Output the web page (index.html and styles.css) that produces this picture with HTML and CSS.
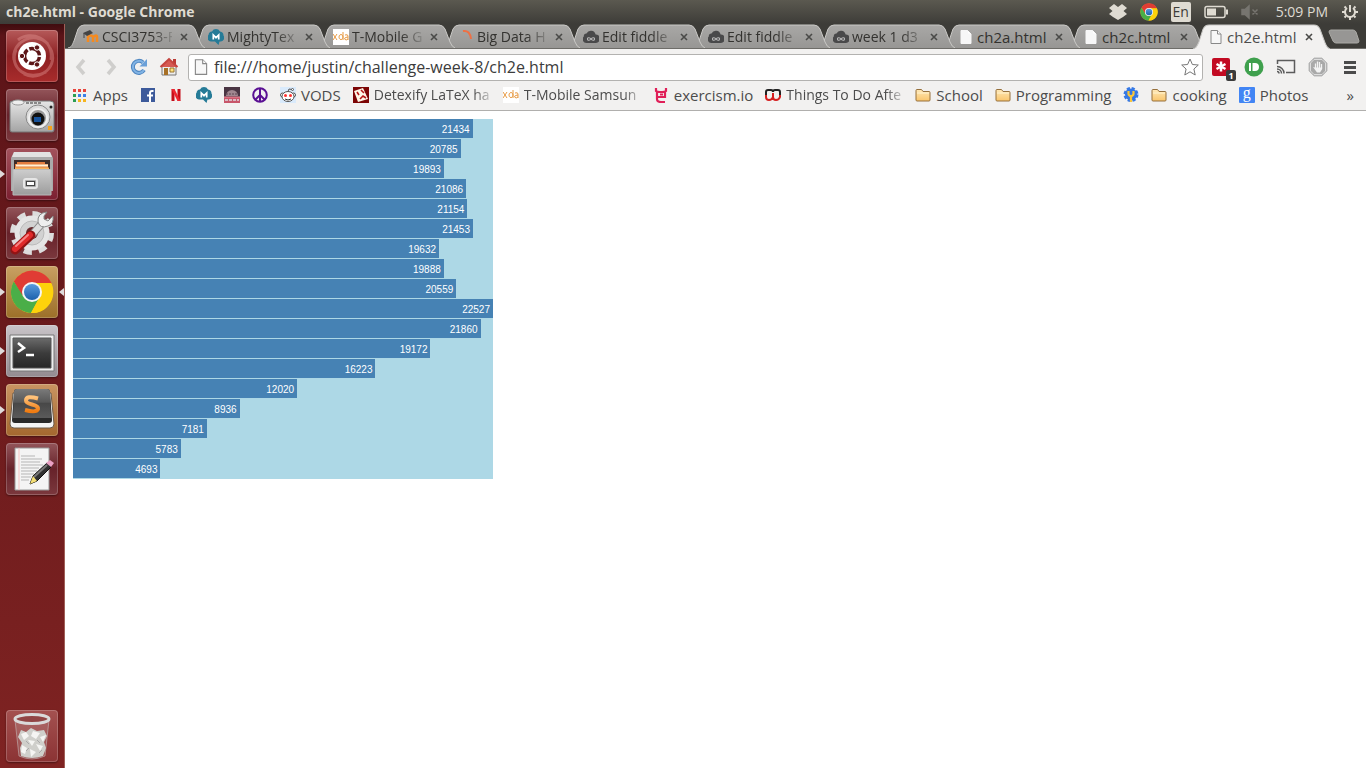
FILE: index.html
```html
<!DOCTYPE html>
<html lang="en">
<head>
<meta charset="utf-8">
<title>ch2e.html</title>
<link rel="stylesheet" href="styles.css">
</head>
<body>
<svg class="defs" aria-hidden="true">
  <defs>
    <linearGradient id="tabFill" x1="0" y1="0" x2="0" y2="1"><stop offset="0" stop-color="#a9a8a6"/><stop offset="1" stop-color="#979694"/></linearGradient>
    <linearGradient id="silver" x1="0" y1="0" x2="0" y2="1"><stop offset="0" stop-color="#e6e6e6"/><stop offset="1" stop-color="#a4a4a4"/></linearGradient>
    <linearGradient id="front" x1="0" y1="0" x2="0" y2="1"><stop offset="0" stop-color="#cdcdcd"/><stop offset="1" stop-color="#9c9c9c"/></linearGradient>
    <linearGradient id="dark" x1="0" y1="0" x2="0" y2="1"><stop offset="0" stop-color="#6b6b6b"/><stop offset=".5" stop-color="#3c3c3c"/><stop offset="1" stop-color="#262626"/></linearGradient>
    <linearGradient id="key" x1="0" y1="0" x2="0" y2="1"><stop offset="0" stop-color="#7a7a7a"/><stop offset=".45" stop-color="#585858"/><stop offset=".5" stop-color="#484848"/><stop offset="1" stop-color="#5a5a5a"/></linearGradient>
    <linearGradient id="orange" x1="0" y1="0" x2="0" y2="1"><stop offset="0" stop-color="#ffc27a"/><stop offset="1" stop-color="#f07c12"/></linearGradient>
    <linearGradient id="folderFill" x1="0" y1="0" x2="0" y2="1"><stop offset="0" stop-color="#ffe9b8"/><stop offset="1" stop-color="#f9c56c"/></linearGradient>
    <linearGradient id="blue" x1="0" y1="0" x2="0" y2="1"><stop offset="0" stop-color="#5a9bdc"/><stop offset="1" stop-color="#1c61ac"/></linearGradient>
  </defs>
  <symbol id="tab-shape" viewBox="0 0 138 24" preserveAspectRatio="none">
    <path d="M1 24C5 23 5 21 7 17L11 5Q13 1 17 1H122Q126 1 128 5L133 18Q135 23 138 24Z"/>
    <path d="M1 24C5 23 5 21 7 17L11 5Q13 1 17 1H122Q126 1 128 5L133 18Q135 23 138 24" fill="none" stroke="#c9c8c5"/>
  </symbol>
  <symbol id="x" viewBox="0 0 16 16"><path d="M5 5L11 11M11 5L5 11" stroke="#4a4a48" stroke-width="1.600" fill="none"/></symbol>
  <symbol id="chrome" viewBox="0 0 44 44">
    <circle cx="22" cy="22" r="21" fill="#fdd20b"/>
    <path d="M3.800 11.500A21 21 0 0 1 41.800 14H22L12 26Z" fill="#e03c34"/>
    <path d="M3.800 11.500A21 21 0 0 0 21 43L30 27L22 22L13 26Z" fill="#4aae48"/>
    <path d="M22 13H41.300A21 21 0 0 1 21 43L30 26Z" fill="#fdd20b"/>
    <circle cx="22" cy="22" r="10" fill="#f5f5f5"/><circle cx="22" cy="22" r="8" fill="url(#blue)"/>
  </symbol>
  <symbol id="cloud" viewBox="0 0 16 16"><path d="M4 14A3.800 3.800 0 0 1 .800 7.500A2.800 2.800 0 0 1 3.500 4.500A4.900 4.900 0 0 1 12.600 5.500A4.200 4.200 0 0 1 13 14Z" fill="#49494a"/><path d="M8 10C7 8.500 4.500 8 4.500 10S7 11.500 8 10S11.500 8 11.500 10S9 11.500 8 10Z" fill="none" stroke="#bbb" stroke-width="1.100"/></symbol>
  <symbol id="page" viewBox="0 0 16 16"><path d="M3 1.500H9.500L13 5V14.500H3Z" fill="#f7f7f7" stroke="currentColor"/><path d="M9.500 1.500V5H13" fill="#fff" stroke="currentColor"/></symbol>
  <symbol id="mighty" viewBox="0 0 16 16"><path d="M3 12.500A3.800 3.800 0 0 1 .500 6A4 4 0 0 1 4 2.500A4.500 4.500 0 0 1 12 2.500A4 4 0 0 1 15.500 6.500A3.800 3.800 0 0 1 13 12.500H11.500L10.500 16L7 12.500Z" fill="#267b97"/><path d="M5.300 10.500V6L8 8.700L10.700 6V10.500" fill="none" stroke="#fff" stroke-width="1.700"/></symbol>
  <symbol id="xda" viewBox="0 0 16 16"><path d="M0 0H16V16H0Z" fill="#fff"/><path d="M0 5L4 11M4 5L0 11M10 3V11M10 8A2 2.500 0 1 0 10 8.100M15 11V7Q15 5 12 6M15 8Q11.500 8 11.500 10Q13 12 15 10" fill="none" stroke="#e79a43"/></symbol>
  <symbol id="folder" viewBox="0 0 16 16"><path d="M1 13V3.500Q1 2.500 2 2.500H6.500L8 4.500H14Q15 4.500 15 5.500V13Q15 14 14 14H2Q1 14 1 13Z" fill="url(#folderFill)" stroke="#96703c"/><path d="M2 6H14" stroke="#fff3cf"/></symbol>
</svg>

<header class="panel">
  <h1 class="panel-title">ch2e.html - Google Chrome</h1>
  <div class="indicators">
    <svg class="i18" viewBox="0 0 18 18"><path d="M5 1L9 4L13 1L18 5L14.500 8L18 11L14 14L9 17L4 14L0 11L3.500 8L0 5Z" fill="#dfdbd2"/></svg>
    <svg class="i18"><use href="#chrome"/></svg>
    <span class="lang">En</span>
    <svg class="battery" viewBox="0 0 24 14"><rect x="1" y="1.500" width="20" height="11" rx="2" fill="none" stroke="#dfdbd2" stroke-width="1.500"/><path d="M3 3.500H12V10.500H3ZM22 4.500H24V9.500H22Z" fill="#dfdbd2"/></svg>
    <svg class="i18" viewBox="0 0 18 18"><path d="M1 6.500H4L8 3V15L4 11.500H1ZM11.500 6.500L16.500 11.500M16.500 6.500L11.500 11.500" fill="#777570" stroke="#777570" stroke-width="1.500"/></svg>
    <span class="clock">5:09 PM</span>
    <svg class="i18" viewBox="0 0 18 18" fill="none" stroke="#dfdbd2" stroke-width="2"><path d="M6 5A5 5 0 1 0 12 5M9 2V9"/><path d="M3.500 3.500L5 5M14.500 3.500L13 5M1 9H4M14 9H17M3.500 14.500L5 13M14.500 14.500L13 13M9 14V17"/></svg>
  </div>
</header>

<div class="desktop">
  <nav class="launcher" aria-label="Launcher">
    <button class="tile dash" aria-label="Dash"><svg viewBox="0 0 52 52"><path d="M8 30C5 12 28 0 42 14M44 18C54 36 34 52 18 44M12 10C24 0 48 8 45 30M40 42C22 52 2 38 10 20" fill="none" stroke="#e59a98" stroke-opacity=".4" stroke-width="3"/><circle cx="26" cy="26" r="14" fill="#fff"/><circle cx="26" cy="26" r="7.500" fill="none" stroke="#5c1517" stroke-width="3.500" stroke-dasharray="13.700 2" stroke-dashoffset="-1"/><g fill="#5c1517" stroke="#fff"><circle cx="16" cy="26" r="2.700"/><circle cx="31" cy="17.500" r="2.700"/><circle cx="31" cy="34.500" r="2.700"/></g></svg></button>
    <button class="tile" aria-label="Camera"><svg viewBox="0 0 52 52"><path d="M4 14Q4 12 7 12H44Q48 12 48 15V41Q48 43 46 43H6Q4 43 4 41Z" fill="url(#silver)" stroke="#777"/><ellipse cx="12" cy="13.500" rx="6" ry="2.500" fill="#eee" stroke="#999"/><path d="M20 14H35" stroke="#888" stroke-width="2" stroke-dasharray="3 1"/><circle cx="32" cy="28" r="12" fill="#ddd" stroke="#888"/><circle cx="32" cy="29" r="9" fill="#999" stroke="#eee" stroke-width="2"/><circle cx="32" cy="30" r="6.500" fill="#111"/><path d="M28 28H35V33H28Z" fill="#17529b"/><path d="M42 37H46V41H42Z" fill="#f6a21b"/><circle cx="45" cy="18" r="1.500" fill="#222"/></svg></button>
    <button class="tile files running" aria-label="Files"><svg viewBox="0 0 52 52"><path d="M8 4H44L47 10V43H5V10Z" fill="#aaa"/><path d="M8 4H44L46 9H6Z" fill="#e2e2e2"/><path d="M8 12H44V22H8Z" fill="#3d2c28"/><path d="M11 14H39V16H42V22H9V16H11Z" fill="#e27c3f"/><path d="M10 17.500H42" stroke="#fff0d4" stroke-width="2"/><path d="M9 20.500H43" stroke="#f7b25c" stroke-width="2"/><path d="M7 21.500H45V47H7Z" fill="url(#front)" stroke="#b9b9b9"/><rect x="18" y="31" width="13" height="9" rx="2" fill="#aaa" stroke="#e6e6e6" stroke-width="2"/><rect x="20.500" y="33.500" width="8" height="4" fill="#fff" stroke="#444"/></svg></button>
    <button class="tile" aria-label="System Settings"><svg viewBox="0 0 52 52"><circle cx="26" cy="26" r="19" fill="none" stroke="#dcdcdc" stroke-width="6" stroke-dasharray="8 6.900"/><circle cx="26" cy="26" r="17.500" fill="#e5e5e5"/><circle cx="26" cy="26" r="12" fill="#d2d2d2" stroke="#bbb"/><circle cx="26" cy="26" r="6" fill="#67282b"/><path d="M25 29L38 14" stroke="#888" stroke-width="8"/><path d="M25 29L38 14" stroke="#ddd" stroke-width="6"/><path d="M41 5Q31 6 32 15Q34 22 42 19Q48 17 47 9L42 14L38 12V9Z" fill="#eee" stroke="#888"/><path d="M9 43L25 28" stroke="#921414" stroke-width="9" stroke-linecap="round"/><path d="M9 42L24 28" stroke="#df2a2a" stroke-width="6" stroke-linecap="round"/><path d="M10 39L22 28" stroke="#f78484" stroke-width="2" stroke-linecap="round"/></svg></button>
    <button class="tile gold running focused" aria-label="Google Chrome"><svg viewBox="0 0 52 52"><use href="#chrome" x="4" y="4" width="44" height="44"/></svg></button>
    <button class="tile grey running" aria-label="Terminal"><svg viewBox="0 0 52 52"><path d="M4 10H48V46H4Z" fill="#eee" stroke="#777"/><path d="M7 13H45V43H7Z" fill="url(#dark)" stroke="#555"/><path d="M12 18L18 23L12 27M20 30H28" fill="none" stroke="#fff" stroke-width="2.500"/></svg></button>
    <button class="tile gold-red running" aria-label="Sublime Text"><svg viewBox="0 0 52 52"><path d="M7 9L4 40Q4 44 8 44H44Q48 44 48 40L45 9Z" fill="#f4f4f4" stroke="#6b5a49"/><path d="M11 5H41Q44 5 44 8L46 36Q46 39 43 39H9Q6 39 6 36L8 8Q8 5 11 5Z" fill="#292929"/><path d="M11 5H41Q44 5 44 8L45 34H7L8 8Q8 5 11 5Z" fill="url(#key)"/><path d="M32 14.500Q20 11 20 16.500Q20 19 26 20.500Q32.500 22 32 25Q30.500 29 19 26" fill="none" stroke="url(#orange)" stroke-width="4"/></svg></button>
    <button class="tile" aria-label="Text Editor"><svg viewBox="0 0 52 52"><path d="M9 5H43V47H9Z" fill="#f4f4f4" stroke="#999"/><path d="M13 5V47" stroke="#f6c4c4"/><path d="M15 13H29M15 16H36M15 19H34M15 22H37M15 25H33M15 28H31M15 31H28M15 34H25M15 37H23" stroke="#b5b5b5"/><path d="M24 41L27 33L41 20L45 24L31 38Z" fill="#303030" stroke="#111"/><path d="M28 34L41 22" stroke="#777" stroke-width="2"/><path d="M24 41L27 33L31 38Z" fill="#f4df75"/><path d="M40 20L44 17L48 20L45 24Z" fill="#eaa1c4"/></svg></button>
    <button class="tile trash" aria-label="Trash"><svg viewBox="0 0 52 52"><path d="M9 10L13 46Q26 52 39 46L43 10Z" fill="#eee" fill-opacity=".15" stroke="#ccc" stroke-opacity=".5"/><path d="M12 27L15 20L20 22L25 18L31 21L38 20L41 26L38 32L40 38L37 46Q26 50 15 46L14 38L16 33Z" fill="#cfcfcb"/><path d="M15 24L20 22L23 26L18 30ZM27 21L34 23L30 29L25 26ZM34 27L40 25L37 32ZM22 30L29 31L26 36ZM16 35L21 38L19 44L15 42ZM30 34L37 36L34 41ZM24 39L30 42L25 47Z" fill="#f5f5f3"/><path d="M20 31L23 34M31 30L34 33M23 38L20 41M33 43L36 40" stroke="#aaa"/><ellipse cx="26" cy="9" rx="17" ry="4.500" fill="#914545" stroke="#dadada" stroke-width="3"/></svg></button>
  </nav>

  <main class="window">
    <div class="tabs" role="tablist">
      <div class="tab" style="--n:9"><svg class="shape"><use href="#tab-shape"/></svg><svg class="i16" viewBox="0 0 16 16"><path d="M5 13V8Q8 5 10 8V13M10 8Q14 5 14 8V13" fill="none" stroke="#f58a1f" stroke-width="2.500"/><path d="M0 4L7 1L10 4L4 7Z" fill="#444"/><path d="M1 4V9" stroke="#444"/></svg><span class="name" role="tab">CSCI3753-F</span><button class="close" aria-label="Close"><svg class="i16"><use href="#x"/></svg></button></div>
      <div class="tab" style="--n:8"><svg class="shape"><use href="#tab-shape"/></svg><svg class="i16"><use href="#mighty"/></svg><span class="name" role="tab">MightyTex</span><button class="close" aria-label="Close"><svg class="i16"><use href="#x"/></svg></button></div>
      <div class="tab" style="--n:7"><svg class="shape"><use href="#tab-shape"/></svg><svg class="i16"><use href="#xda"/></svg><span class="name" role="tab">T-Mobile G</span><button class="close" aria-label="Close"><svg class="i16"><use href="#x"/></svg></button></div>
      <div class="tab" style="--n:6"><svg class="shape"><use href="#tab-shape"/></svg><svg class="i16" viewBox="0 0 16 16"><path d="M5 2Q12 1 13 10" fill="none" stroke="#ef7044" stroke-width="2"/></svg><span class="name" role="tab">Big Data H</span><button class="close" aria-label="Close"><svg class="i16"><use href="#x"/></svg></button></div>
      <div class="tab" style="--n:5"><svg class="shape"><use href="#tab-shape"/></svg><svg class="i16"><use href="#cloud"/></svg><span class="name" role="tab">Edit fiddle</span><button class="close" aria-label="Close"><svg class="i16"><use href="#x"/></svg></button></div>
      <div class="tab" style="--n:4"><svg class="shape"><use href="#tab-shape"/></svg><svg class="i16"><use href="#cloud"/></svg><span class="name" role="tab">Edit fiddle</span><button class="close" aria-label="Close"><svg class="i16"><use href="#x"/></svg></button></div>
      <div class="tab" style="--n:3"><svg class="shape"><use href="#tab-shape"/></svg><svg class="i16"><use href="#cloud"/></svg><span class="name" role="tab">week 1 d3</span><button class="close" aria-label="Close"><svg class="i16"><use href="#x"/></svg></button></div>
      <div class="tab" style="--n:2"><svg class="shape"><use href="#tab-shape"/></svg><svg class="i16 white"><use href="#page"/></svg><span class="name whole" role="tab">ch2a.html</span><button class="close" aria-label="Close"><svg class="i16"><use href="#x"/></svg></button></div>
      <div class="tab" style="--n:1"><svg class="shape"><use href="#tab-shape"/></svg><svg class="i16 white"><use href="#page"/></svg><span class="name whole" role="tab">ch2c.html</span><button class="close" aria-label="Close"><svg class="i16"><use href="#x"/></svg></button></div>
      <div class="tab active" style="--n:10"><svg class="shape"><use href="#tab-shape"/></svg><svg class="i16 outline"><use href="#page"/></svg><span class="name whole" role="tab" aria-selected="true">ch2e.html</span><button class="close" aria-label="Close"><svg class="i16"><use href="#x"/></svg></button></div>
      <button class="new-tab" aria-label="New tab"><svg viewBox="0 0 32 16"><path d="M3 1H25Q27 1 28 3L31 12Q31 14 29 14H8Q6 14 5 12L1 3Q1 1 3 1Z" fill="#979694" stroke="#aaa9a5"/></svg></button>
    </div>

    <div class="toolbar">
      <button class="tool" aria-label="Back"><svg class="i18" viewBox="0 0 18 18"><path d="M12 2L6 9L12 16" fill="none" stroke="#cfcecc" stroke-width="3.500"/></svg></button>
      <button class="tool" aria-label="Forward"><svg class="i18" viewBox="0 0 18 18"><path d="M7 2L13 9L7 16" fill="none" stroke="#cfcecc" stroke-width="3.500"/></svg></button>
      <button class="tool" aria-label="Reload"><svg class="i18" viewBox="0 0 18 18"><path d="M14 12A6 6 0 1 1 13 4.500" fill="none" stroke="#4f86c0" stroke-width="4"/><path d="M14 12A6 6 0 1 1 13 4.500" fill="none" stroke="#82b4e5" stroke-width="2"/><path d="M17 1V8.500H9.500Z" fill="#6ba0d8"/></svg></button>
      <button class="tool" aria-label="Home"><svg class="i20" viewBox="0 0 20 20"><path d="M3 9H17V18H3Z" fill="#eee" stroke="#777"/><path d="M5 11H9V18H5Z" fill="#a77026"/><path d="M11 11H15V15H11Z" fill="#ffe37b" stroke="#9a7530"/><path d="M14 2H17V8H14Z" fill="#bb3b35"/><path d="M1.500 10L10 2L18.500 10" fill="#d65a53" stroke="#c5443f" stroke-width="2"/></svg></button>
      <div class="omnibox">
        <svg class="i18 outline"><use href="#page"/></svg>
        <input type="text" aria-label="Address" value="file:///home/justin/challenge-week-8/ch2e.html">
        <button class="star" aria-label="Bookmark"><svg class="i18" viewBox="0 0 18 18"><path d="M9 1L11.400 6.500L17.300 7L12.900 11L14.200 17L9 13.800L3.800 17L5.100 11L.700 7L6.600 6.500Z" fill="#fff" stroke="#777"/></svg></button>
      </div>
      <div class="extensions">
        <button class="ext" aria-label="Password manager"><svg class="i18" viewBox="0 0 18 18"><rect width="18" height="18" rx="2" fill="#c20a22"/><path d="M9 3.500V13.500M4.500 6L13.500 11M13.500 6L4.500 11" stroke="#fff" stroke-width="2.500"/></svg><span class="badge">1</span></button>
        <button class="ext" aria-label="Push"><svg class="i20" viewBox="0 0 20 20"><circle cx="10" cy="10" r="9.500" fill="#3fa04d"/><path d="M5 6H7V14H5ZM8.500 6H11A4 4 0 0 1 11 14H8.500Z" fill="#fff"/></svg></button>
        <button class="ext" aria-label="Cast"><svg class="i20" viewBox="0 0 20 20" fill="none" stroke="#5c5c5c"><path d="M1.500 7V3.500H18.500V15.500H10" stroke-width="1.500"/><path d="M1 9.500A7 7 0 0 1 8 16.500M1 12A4.500 4.500 0 0 1 5.500 16.500M1 14.500A2 2 0 0 1 3 16.500" stroke-width="1.500"/></svg></button>
        <button class="ext" aria-label="Blocker"><svg class="i20" viewBox="0 0 20 20"><path d="M6 1H14L19 6V14L14 19H6L1 14V6Z" fill="#a9a9a9" stroke="#bbb"/><path d="M6 2.500H14L17.500 6V14L14 17.500H6L2.500 14V6Z" fill="none" stroke="#ddd"/><path d="M7.500 11V6.500M9.500 11V4.500M11.500 11V5M13.500 11V7" stroke="#f2f2f2" stroke-width="1.300"/><path d="M5 10L7 10.500H14.200V12L12 15.500H9Z" fill="#f2f2f2"/></svg></button>
        <button class="ext" aria-label="Menu"><svg class="i20" viewBox="0 0 20 20"><path d="M4 5.500H16M4 10.500H16M4 15.500H16" stroke="#4b4b4b" stroke-width="3"/></svg></button>
      </div>
    </div>

    <nav class="bookmarks" aria-label="Bookmarks">
      <a href="#"><svg class="i16" viewBox="0 0 16 16"><path d="M1 2H4V5H1ZM6 2H9V5H6ZM11 2H14V5H11Z" fill="#e8453c"/><path d="M1 7H4V10H1ZM1 12H4V15H1Z" fill="#2c9f53"/><path d="M6 7H9V10H6ZM11 7H14V10H11Z" fill="#3b82e8"/><path d="M6 12H9V15H6ZM11 12H14V15H11Z" fill="#f6b51f"/></svg><span>Apps</span></a>
      <a href="#" aria-label="Facebook"><svg class="i16" viewBox="0 0 16 16"><path d="M1 1H15V15H1Z" fill="#3d5a9b"/><path d="M13.500 4H12Q10 4 10 6V15M7 8.500H13" fill="none" stroke="#fff" stroke-width="2"/></svg></a>
      <a href="#" aria-label="Netflix"><svg class="i16" viewBox="0 0 16 16"><path d="M5 2V14M11 2V14" stroke="#c50d19" stroke-width="3"/><path d="M3.500 2H6.500L12.500 14H9.500Z" fill="#ed2530"/></svg></a>
      <a href="#" aria-label="MightyText"><svg class="i16"><use href="#mighty"/></svg></a>
      <a href="#" aria-label="Arcade"><svg class="i16" viewBox="0 0 16 16"><path d="M0 0H16V16H0Z" fill="#4a3543"/><path d="M2 9A6 6 0 0 1 14 9Z" fill="#a08790"/><path d="M0 10H16V16H0Z" fill="#c8566a"/><path d="M2 7H14" stroke="#5c4450" stroke-dasharray="2 1"/><path d="M0 10H16" stroke="#ea8998"/><path d="M1 13H15" stroke="#d8b9c2" stroke-width="2" stroke-dasharray="3 1"/></svg></a>
      <a href="#" aria-label="Peace"><svg class="i16" viewBox="0 0 16 16"><path d="M8 1V15M8 8L3 13M8 8L13 13" stroke="#5a1093" stroke-width="2"/><circle cx="8" cy="8" r="6.800" fill="none" stroke="#5a1093" stroke-width="2"/></svg></a>
      <a href="#"><svg class="i16" viewBox="0 0 16 16"><path d="M0 0H16V16H0Z" fill="#d9eafb"/><g fill="#fff" stroke="#555"><circle cx="2.500" cy="8" r="2"/><circle cx="13.500" cy="8" r="2"/><ellipse cx="8" cy="9.500" rx="6" ry="5"/><path d="M8 4.500L9 2L12 2.500" fill="none"/><circle cx="12.500" cy="2.500" r="1"/></g><circle cx="5.500" cy="8.500" r="1.500" fill="#f33"/><circle cx="10.500" cy="8.500" r="1.500" fill="#f33"/><path d="M5 12Q8 14 11 12" fill="none" stroke="#333"/></svg><span>VODS</span></a>
      <a href="#"><svg class="i16" viewBox="0 0 16 16"><path d="M0 0H16V16H0Z" fill="#7c0505"/><path d="M1 4L10 1L15 12L5 15Z" fill="#fff8e8"/><path d="M4 5L6 8M8 3L11 6M7 12L10 9L13 11" fill="none" stroke="#b51818" stroke-width="1.600"/></svg><span class="fade">Detexify LaTeX ha</span></a>
      <a href="#"><svg class="i16"><use href="#xda"/></svg><span class="fade">T-Mobile Samsun</span></a>
      <a href="#"><svg class="i16" viewBox="0 0 16 16"><path d="M3 1V4Q4 5 7 5H9Q12 5 13 4V1M4 5V12Q4 15 8 15H12M12 5V10H5M7 7.500H10" fill="none" stroke="#e01f58" stroke-width="2.200"/></svg><span>exercism.io</span></a>
      <a href="#"><svg class="i16" viewBox="0 0 16 16" fill="none" stroke-width="2"><path d="M1 8V5Q1 3 3 3H6Q8 3 8 5Q8 3 10 3H13Q15 3 15 5V8" stroke="#222"/><path d="M1 8V10Q1 13 4 13T8 10V6M8 10Q8 13 11 13T15 10V8" stroke="#d51f20"/></svg><span class="fade">Things To Do Afte</span></a>
      <a href="#"><svg class="i16"><use href="#folder"/></svg><span>School</span></a>
      <a href="#"><svg class="i16"><use href="#folder"/></svg><span>Programming</span></a>
      <a href="#" aria-label="Tools"><svg class="i16" viewBox="0 0 16 16"><circle cx="8" cy="7.500" r="6" fill="#3578e5"/><circle cx="8" cy="7.500" r="6" fill="none" stroke="#3578e5" stroke-width="3" stroke-dasharray="3 1.700"/><path d="M5.500 4V7Q6 9 8 9T10.500 7V4M8 9V15" fill="none" stroke="#fbc638" stroke-width="2.200"/></svg></a>
      <a href="#"><svg class="i16"><use href="#folder"/></svg><span>cooking</span></a>
      <a href="#"><span class="google">g</span><span>Photos</span></a>
      <button class="more" aria-label="More bookmarks">»</button>
    </nav>

    <section class="page">
      <div class="chart">
        <div class="bar" style="width:95.15%">21434</div>
        <div class="bar" style="width:92.27%">20785</div>
        <div class="bar" style="width:88.31%">19893</div>
        <div class="bar" style="width:93.6%">21086</div>
        <div class="bar" style="width:93.91%">21154</div>
        <div class="bar" style="width:95.23%">21453</div>
        <div class="bar" style="width:87.15%">19632</div>
        <div class="bar" style="width:88.29%">19888</div>
        <div class="bar" style="width:91.26%">20559</div>
        <div class="bar" style="width:100%">22527</div>
        <div class="bar" style="width:97.04%">21860</div>
        <div class="bar" style="width:85.11%">19172</div>
        <div class="bar" style="width:72.02%">16223</div>
        <div class="bar" style="width:53.36%">12020</div>
        <div class="bar" style="width:39.67%">8936</div>
        <div class="bar" style="width:31.88%">7181</div>
        <div class="bar" style="width:25.67%">5783</div>
        <div class="bar" style="width:20.83%">4693</div>
      </div>
    </section>
  </main>
</div>
</body>
</html>
```

FILE: styles.css
```css
* { box-sizing: border-box; }
body {
  margin: 0;
  min-height: 100vh;
  display: flex;
  flex-direction: column;
  font: 15px/20px "Open Sans", "Noto Sans", sans-serif;
  color: #4c4c4c;
  background: #fff;
}
button { margin: 0; padding: 0; border: 0; background: none; font: inherit; color: inherit; }
svg { display: block; flex: none; }
.defs { position: absolute; width: 0; height: 0; }
.i16 { width: 16px; height: 16px; }
.i18 { width: 18px; height: 18px; }
.i20 { width: 20px; height: 20px; }

/* Top panel */
.panel {
  display: flex;
  justify-content: space-between;
  align-items: center;
  height: 24px;
  padding: 0 7px 0 6px;
  background: linear-gradient(#5b5950, #3d3c38);
  color: #dfdbd2;
  font-size: 14px;
}
.panel-title { margin: 0; font-size: 14px; line-height: 24px; font-weight: 700; }
.indicators { display: flex; align-items: center; gap: 13px; }
.lang {
  width: 20px;
  border-radius: 2px;
  background: #dfdbd2;
  color: #3d3c38;
  text-align: center;
}
.battery { width: 24px; height: 14px; }
.clock { margin-left: 4px; }

.desktop { flex: 1; display: flex; }

/* Launcher */
.launcher {
  flex: none;
  display: flex;
  flex-direction: column;
  gap: 7px;
  width: 65px;
  padding: 6px;
  background: linear-gradient(#3f0c0f, #5c1418 12px, #7f2322);
  border-right: 1px solid #a05f58;
}
.tile {
  position: relative;
  width: 52px;
  height: 52px;
  border-radius: 4px;
  background: linear-gradient(#93555a, #67222a 50%, #7b383d);
  box-shadow: inset 0 0 0 1px rgba(255, 255, 255, .2), 0 1px 2px rgba(0, 0, 0, .4);
}
.tile svg { width: 52px; height: 52px; }
.dash { background: linear-gradient(#b65a5a, #8c2022 50%, #a92c2c); }
.files { background: linear-gradient(#a3525c, #7b1f30); }
.gold { background: linear-gradient(#c9a063, #9c7029); }
.grey { background: linear-gradient(#c9c4c8, #938b90); }
.gold-red { background: linear-gradient(#c99462, #a4682f); }
.trash { margin-top: auto; background: linear-gradient(#a45150, #8b3334); }
.running::before, .focused::after {
  content: "";
  position: absolute;
  top: 22px;
  border: 4px solid transparent;
}
.running::before { left: -6px; border-left: 5px solid #dfdbdb; border-right: 0; }
.focused::after { right: -6px; border-right: 5px solid #dfdbdb; border-left: 0; }

/* Browser window */
.window { flex: 1; min-width: 0; display: flex; flex-direction: column; }
.tabs {
  display: flex;
  height: 25px;
  padding-left: 2px;
  background: #3d3c38;
  box-shadow: inset 0 -1px #6e6d69;
}
.tab {
  position: relative;
  z-index: var(--n);
  flex: 0 1 125px;
  min-width: 0;
  display: flex;
  align-items: center;
  padding: 0 0 0 16px;
  color: #33322f;
}
.shape { position: absolute; top: 0; left: 0; z-index: -1; width: 138px; height: 24px; fill: url(#tabFill); }
.tab > .i16 { margin-right: 3px; }
.active .shape { height: 25px; fill: #f2f1f0; }
.active { color: #4c4c4c; }
.name {
  flex: 1;
  min-width: 0;
  overflow: hidden;
  white-space: nowrap;
  font-size: 14px;
  mask-image: linear-gradient(90deg, #000 70%, rgba(0, 0, 0, .2));
}
.whole { font-size: 15px; mask-image: none; }
.close { margin-left: 4px; }
.white { color: #f7f7f7; }
.outline { color: #888; }
.new-tab { margin: 0 0 0 11px; }
.new-tab svg { width: 32px; height: 16px; }

.toolbar {
  display: flex;
  align-items: center;
  height: 36px;
  padding: 0 6px 0 7px;
  background: #f2f1f0;
}
.tool { width: 29px; display: flex; align-items: center; }
.omnibox {
  flex: 1;
  display: flex;
  align-items: center;
  height: 27px;
  padding: 0 3px;
  border: 1px solid #b3b2b0;
  border-radius: 3px;
  background: #fff;
}
.omnibox input {
  flex: 1;
  min-width: 0;
  padding: 0 4px;
  border: 0;
  outline: 0;
  background: none;
  font: 16px/24px "Open Sans", "Noto Sans", sans-serif;
  color: #3c3c3c;
}
.extensions { display: flex; gap: 12px; padding-left: 9px; }
.ext { position: relative; width: 20px; height: 20px; }
.badge {
  position: absolute;
  right: -4px;
  bottom: -4px;
  width: 10px;
  border-radius: 2px;
  background: #3b3b3b;
  color: #fff;
  font: 700 9px/11px "Open Sans", sans-serif;
}

.bookmarks {
  display: flex;
  align-items: center;
  gap: 12px;
  height: 26px;
  padding: 0 12px 5px 7px;
  border-bottom: 1px solid #b0afad;
  background: #f2f1f0;
}
.bookmarks a { display: flex; align-items: center; gap: 5px; color: inherit; text-decoration: none; white-space: nowrap; }
.fade { width: 117px; overflow: hidden; font-size: 14px; mask-image: linear-gradient(90deg, #000 85%, rgba(0, 0, 0, .2)); }
.google {
  width: 16px;
  height: 16px;
  border-radius: 1px;
  background: #4285f4;
  color: #fff;
  font: 16px/12px "Liberation Serif", serif;
  text-align: center;
}
.more { margin-left: auto; }

/* Page content */
.page { flex: 1; padding: 8px; }
.chart { width: 420px; padding-bottom: 1px; background: lightblue; }
.bar {
  height: 19px;
  margin-bottom: 1px;
  padding-right: 3px;
  background: steelblue;
  color: #fff;
  font: 10px/22px "Liberation Sans", Arial, sans-serif;
  text-align: right;
}
.bar:last-child { margin-bottom: 0; }
```
